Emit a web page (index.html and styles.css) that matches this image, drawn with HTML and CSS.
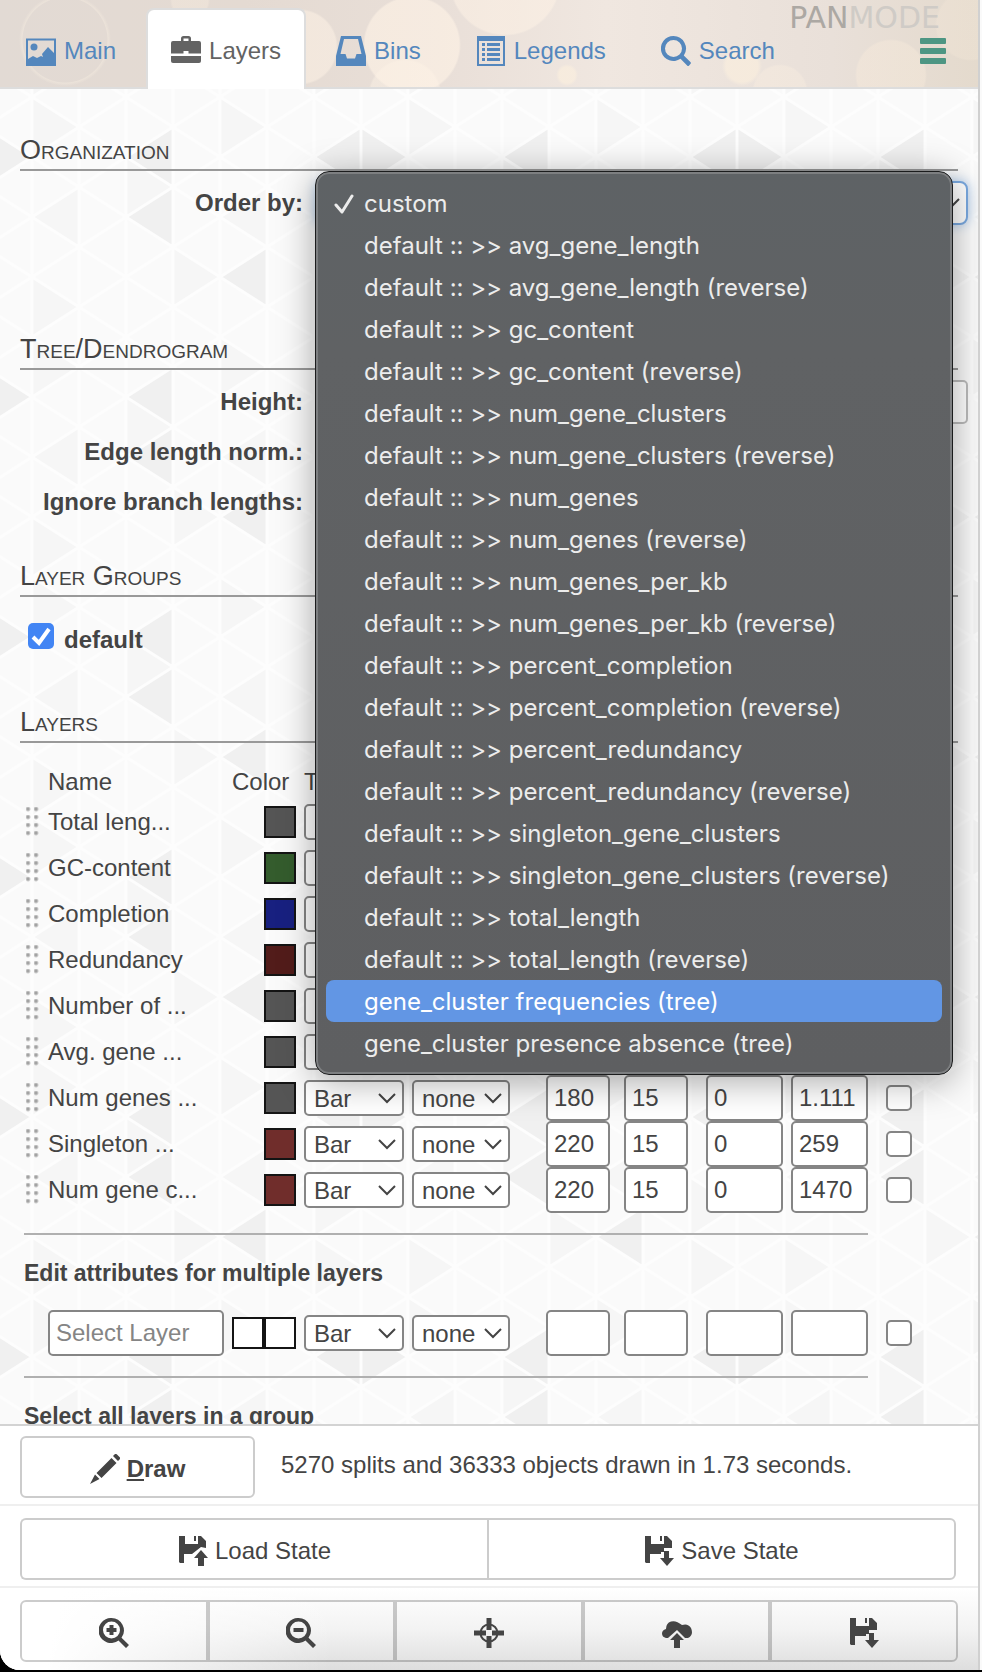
FILE: index.html
```
<!DOCTYPE html>
<html lang="en">
<head>
<meta charset="utf-8">
<title>Layers</title>
<link rel="stylesheet" href="styles.css">
</head>
<body>
<div class="panel">
  <header class="banner">
    <div class="brand" aria-hidden="true"><span class="brand-strong">PAN</span>MODE</div>
    <nav class="tabs">
      <a class="tab" href="#main"><svg class="icon" viewBox="0 0 30 30"><path fill-rule="evenodd" d="M0 2.500h30V30H0zM2 4.500V23l5-3 4 2 4-2 2 1-1-3 6-7 6 6V4.500z"/><circle cx="8" cy="11" r="3.500"/></svg>Main</a>
      <a class="tab tab-active" href="#layers" aria-current="page"><svg class="icon" viewBox="0 0 30 30"><path fill-rule="evenodd" d="M10 5V2.500Q10 0 12.500 0h5Q20 0 20 2.500V5h8q2 0 2 2v10.500H17.500v-2.500h-5v2.500H0V7q0-2 2-2zM12.500 5h5V2.500h-5z"/><path d="M0 20h30v5q0 2-2 2H2q-2 0-2-2z"/></svg>Layers</a>
      <a class="tab" href="#bins"><svg class="icon" viewBox="0 0 30 30"><path fill-rule="evenodd" d="M5 0h20l5 20v10H0V20zM8 3L4.500 18h5L11 22.500h8L20.500 18h5L22 3z"/></svg>Bins</a>
      <a class="tab" href="#legends"><svg class="icon" viewBox="0 0 30 30"><path fill-rule="evenodd" d="M1 0h28v30H1zM3 5v23h24V5zM6 7h3v3H6zm5 0h13v3H11zM6 12h3v3H6zm5 0h13v3H11zM6 17h3v3H6zm5 0h13v3H11zM6 22h3v3H6zm5 0h13v3H11z"/></svg>Legends</a>
      <a class="tab" href="#search"><svg class="icon" viewBox="0 0 30 30"><path fill-rule="evenodd" d="M12.500 0a12.500 12.500 0 0 1 10.300 19.500l6.600 6.600q1 1 0 2l-1.300 1.300q-1 1-2 0l-6.600-6.600A12.500 12.500 0 1 1 12.500 0zM12.500 4a8.500 8.500 0 1 0 0 17a8.500 8.500 0 0 0 0-17z"/></svg>Search</a>
      <button class="menu-toggle" type="button" aria-label="Toggle panel"><span></span><span></span><span></span></button>
    </nav>
  </header>

  <main class="content">
    <section class="section section-organization">
      <h2>Organization</h2>
      <div class="field">
        <label for="order">Order by:</label>
        <div class="control">
          <select id="order" class="select select-wide select-focus"><option value=""></option></select>
          <ul class="dropdown" role="listbox" aria-label="Order by">
            <li role="option" aria-selected="true" class="checked"><svg class="tick" viewBox="0 0 20 20"><path d="M2 11l6 7L18 2"/></svg>custom</li>
            <li role="option">default :: &gt;&gt; avg_gene_length</li>
            <li role="option">default :: &gt;&gt; avg_gene_length (reverse)</li>
            <li role="option">default :: &gt;&gt; gc_content</li>
            <li role="option">default :: &gt;&gt; gc_content (reverse)</li>
            <li role="option">default :: &gt;&gt; num_gene_clusters</li>
            <li role="option">default :: &gt;&gt; num_gene_clusters (reverse)</li>
            <li role="option">default :: &gt;&gt; num_genes</li>
            <li role="option">default :: &gt;&gt; num_genes (reverse)</li>
            <li role="option">default :: &gt;&gt; num_genes_per_kb</li>
            <li role="option">default :: &gt;&gt; num_genes_per_kb (reverse)</li>
            <li role="option">default :: &gt;&gt; percent_completion</li>
            <li role="option">default :: &gt;&gt; percent_completion (reverse)</li>
            <li role="option">default :: &gt;&gt; percent_redundancy</li>
            <li role="option">default :: &gt;&gt; percent_redundancy (reverse)</li>
            <li role="option">default :: &gt;&gt; singleton_gene_clusters</li>
            <li role="option">default :: &gt;&gt; singleton_gene_clusters (reverse)</li>
            <li role="option">default :: &gt;&gt; total_length</li>
            <li role="option">default :: &gt;&gt; total_length (reverse)</li>
            <li role="option" class="hovered">gene_cluster frequencies (tree)</li>
            <li role="option">gene_cluster presence absence (tree)</li>
          </ul>
        </div>
      </div>
    </section>

    <section class="section section-tree">
      <h2>Tree/Dendrogram</h2>
      <div class="field"><label for="height">Height:</label><div class="control"><input id="height" class="input" type="text"></div></div>
      <div class="field"><label for="edge">Edge length norm.:</label><div class="control"><input id="edge" class="checkbox" type="checkbox"></div></div>
      <div class="field"><label for="ignore">Ignore branch lengths:</label><div class="control"><input id="ignore" class="checkbox" type="checkbox"></div></div>
    </section>

    <section class="section section-groups">
      <h2>Layer Groups</h2>
      <div class="group"><input id="group-default" class="checkbox" type="checkbox" checked><label for="group-default">default</label></div>
    </section>

    <section class="section">
      <h2>Layers</h2>
      <div class="layers">
        <table class="grid">
          <colgroup><col class="c-grip"><col><col class="c-color"><col class="c-type"><col class="c-norm"><col class="c-height"><col class="c-margin"><col class="c-min"><col class="c-max"><col class="c-check"></colgroup>
          <thead><tr><th></th><th>Name</th><th>Color</th><th>Type</th><th></th><th></th><th></th><th></th><th></th><th></th></tr></thead>
          <tbody>
            <tr><td><span class="grip"></span></td><td>Total leng...</td><td class="colors"><button type="button" class="swatch gray" aria-label="Color"></button></td><td><select class="select w-type" aria-label="Type"><option value=""></option></select></td><td></td><td></td><td></td><td></td><td></td><td></td></tr>
            <tr><td><span class="grip"></span></td><td>GC-content</td><td class="colors"><button type="button" class="swatch green" aria-label="Color"></button></td><td><select class="select w-type" aria-label="Type"><option value=""></option></select></td><td></td><td></td><td></td><td></td><td></td><td></td></tr>
            <tr><td><span class="grip"></span></td><td>Completion</td><td class="colors"><button type="button" class="swatch blue" aria-label="Color"></button></td><td><select class="select w-type" aria-label="Type"><option value=""></option></select></td><td></td><td></td><td></td><td></td><td></td><td></td></tr>
            <tr><td><span class="grip"></span></td><td>Redundancy</td><td class="colors"><button type="button" class="swatch maroon" aria-label="Color"></button></td><td><select class="select w-type" aria-label="Type"><option value=""></option></select></td><td></td><td></td><td></td><td></td><td></td><td></td></tr>
            <tr><td><span class="grip"></span></td><td>Number of ...</td><td class="colors"><button type="button" class="swatch gray" aria-label="Color"></button></td><td><select class="select w-type" aria-label="Type"><option value=""></option></select></td><td></td><td></td><td></td><td></td><td></td><td></td></tr>
            <tr><td><span class="grip"></span></td><td>Avg. gene ...</td><td class="colors"><button type="button" class="swatch gray" aria-label="Color"></button></td><td><select class="select w-type" aria-label="Type"><option value=""></option></select></td><td></td><td></td><td></td><td></td><td></td><td></td></tr>
            <tr><td><span class="grip"></span></td><td>Num genes ...</td><td class="colors"><button type="button" class="swatch gray" aria-label="Color"></button></td><td><select class="select w-type" aria-label="Type"><option>Bar</option></select></td><td><select class="select w-norm" aria-label="Normalization"><option>none</option></select></td><td><input class="input w-small" aria-label="Height" value="180"></td><td><input class="input w-small" aria-label="Margin" value="15"></td><td><input class="input w-range" aria-label="Min" value="0"></td><td><input class="input w-range" aria-label="Max" value="1.111"></td><td><input class="checkbox" type="checkbox" aria-label="Select Num genes"></td></tr>
            <tr><td><span class="grip"></span></td><td>Singleton ...</td><td class="colors"><button type="button" class="swatch red" aria-label="Color"></button></td><td><select class="select w-type" aria-label="Type"><option>Bar</option></select></td><td><select class="select w-norm" aria-label="Normalization"><option>none</option></select></td><td><input class="input w-small" aria-label="Height" value="220"></td><td><input class="input w-small" aria-label="Margin" value="15"></td><td><input class="input w-range" aria-label="Min" value="0"></td><td><input class="input w-range" aria-label="Max" value="259"></td><td><input class="checkbox" type="checkbox" aria-label="Select Singleton"></td></tr>
            <tr><td><span class="grip"></span></td><td>Num gene c...</td><td class="colors"><button type="button" class="swatch red" aria-label="Color"></button></td><td><select class="select w-type" aria-label="Type"><option>Bar</option></select></td><td><select class="select w-norm" aria-label="Normalization"><option>none</option></select></td><td><input class="input w-small" aria-label="Height" value="220"></td><td><input class="input w-small" aria-label="Margin" value="15"></td><td><input class="input w-range" aria-label="Min" value="0"></td><td><input class="input w-range" aria-label="Max" value="1470"></td><td><input class="checkbox" type="checkbox" aria-label="Select Num gene clusters"></td></tr>
          </tbody>
        </table>
        <hr>
        <h3>Edit attributes for multiple layers</h3>
        <table class="grid">
          <colgroup><col class="c-grip"><col><col class="c-color"><col class="c-type"><col class="c-norm"><col class="c-height"><col class="c-margin"><col class="c-min"><col class="c-max"><col class="c-check"></colgroup>
          <tbody>
            <tr><td></td><td class="picker"><input class="input" type="text" placeholder="Select Layer" aria-label="Select Layer"></td><td class="colors"><button type="button" class="swatch" aria-label="Start color"></button><button type="button" class="swatch" aria-label="End color"></button></td><td><select class="select w-type" aria-label="Type"><option>Bar</option></select></td><td><select class="select w-norm" aria-label="Normalization"><option>none</option></select></td><td><input class="input w-small" aria-label="Height"></td><td><input class="input w-small" aria-label="Margin"></td><td><input class="input w-range" aria-label="Min"></td><td><input class="input w-range" aria-label="Max"></td><td><input class="checkbox" type="checkbox" aria-label="Select all"></td></tr>
          </tbody>
        </table>
        <hr>
        <h3>Select all layers in a group</h3>
      </div>
    </section>
  </main>

  <footer class="actions">
    <div class="row">
      <button type="button" class="btn btn-draw"><svg class="icon" viewBox="0 0 30 30"><path d="M23 2l2-2q1-.5 2 .5L29.500 3q1 1 .5 2l-2 2zM21.500 4l5 5L11.500 24l-5-5zM5 20.500l4.500 4.500L0 30z"/></svg><span><u>D</u>raw</span></button>
      <p class="status">5270 splits and 36333 objects drawn in 1.73 seconds.</p>
    </div>
    <div class="row row-state">
      <button type="button" class="btn"><svg class="icon" viewBox="0 0 30 30"><path fill-rule="evenodd" d="M1 0h6v8h13V0h3l5 5v7l-5-1-9 7H6v9H2L1 26zM16 0h2v5h-2z"/><path d="M23 14l7 8h-4v8h-6v-8h-4z"/></svg>Load State</button>
      <button type="button" class="btn"><svg class="icon" viewBox="0 0 30 30"><path d="M1 0h6v8h13V0h3l5 5v7h-8v4h-3v2H6v9H2L1 26zM16 0h2v5h-2z"/><path d="M20 15h5v7h5l-7 8-7-8h4z"/></svg>Save State</button>
    </div>
    <div class="row row-tools">
      <button type="button" class="btn" aria-label="Zoom in"><svg class="icon" viewBox="0 0 30 30"><path fill-rule="evenodd" d="M12.500 0a12.500 12.500 0 0 1 10 19.800L30 27l-3 3-7.500-7.500A12.500 12.500 0 1 1 12.500 0zM12.500 3.500a8.500 8.500 0 1 0 0 17a8.500 8.500 0 0 0 0-17zM10.500 7h4v3h3v4h-3v3h-4v-3h-3v-4h3z"/></svg></button>
      <button type="button" class="btn" aria-label="Zoom out"><svg class="icon" viewBox="0 0 30 30"><path fill-rule="evenodd" d="M12.500 0a12.500 12.500 0 0 1 10 19.800L30 27l-3 3-7.500-7.500A12.500 12.500 0 1 1 12.500 0zM12.500 3.500a8.500 8.500 0 1 0 0 17a8.500 8.500 0 0 0 0-17zM7.500 10h10v4h-10z"/></svg></button>
      <button type="button" class="btn" aria-label="Center"><svg class="icon" viewBox="0 0 30 30"><circle cx="15" cy="15" r="8.500" fill="none" stroke="currentColor" stroke-width="2"/><path d="M12.500 0h5v12h-5zM12.500 18h5v12h-5zM0 12.500h12v5H0zM18 12.500h12v5H18z"/></svg></button>
      <button type="button" class="btn" aria-label="Upload"><svg class="icon" viewBox="0 0 30 30"><path d="M4 20Q0 19 0 15.500T4 11Q4 5 9 3.500T20 7q6-2 9 3 3 7-3 10l-3 0-8-8-9 8z"/><path d="M15 15l7 7h-4v8h-6v-8H8z"/></svg></button>
      <button type="button" class="btn" aria-label="Save"><svg class="icon" viewBox="0 0 30 30"><path d="M1 0h6v8h13V0h3l5 5v7h-8v4h-3v2H6v9H2L1 26zM16 0h2v5h-2z"/><path d="M20 15h5v7h5l-7 8-7-8h4z"/></svg></button>
    </div>
  </footer>
</div>
</body>
</html>
```

FILE: styles.css
```
* { box-sizing: border-box; }

body {
  margin: 0;
  background: #000;
  color: #444;
  font: 24px/34px "Liberation Sans", Arial, sans-serif;
}

button, input, select { font: inherit; color: inherit; }

.panel {
  display: flex;
  flex-direction: column;
  height: calc(100vh - 2px);
  border-right: 2px solid #d0d0d0;
  margin-right: 2px;
  background: #fff;
  box-shadow: 2px 0 0 #fafafa;
  border-bottom-left-radius: 20px;
  overflow: hidden;
}

.icon {
  flex: none;
  width: 30px;
  height: 30px;
  fill: currentColor;
}

/* Banner and tabs */
.banner {
  position: relative;
  flex: none;
  background:
    radial-gradient(circle at 65px 40px, transparent 42px, rgba(255,245,230,.3) 43px, transparent 46px),
    radial-gradient(circle at 300px 47px, rgba(255,243,230,.5) 36px, transparent 38px),
    radial-gradient(circle at 412px 45px, rgba(255,243,230,.6) 47px, transparent 49px),
    radial-gradient(circle at 405px 96px, rgba(255,245,232,.4) 35px, transparent 37px),
    radial-gradient(circle at 505px -20px, rgba(255,243,230,.5) 54px, transparent 56px),
    radial-gradient(circle at 190px 0, rgba(255,242,226,.3) 18px, transparent 20px),
    radial-gradient(circle at 567px 75px, rgba(255,242,222,.5) 8px, transparent 11px),
    radial-gradient(circle at 742px 66px, rgba(255,242,222,.5) 16px, transparent 20px),
    radial-gradient(circle at 780px 92px, rgba(255,242,226,.3) 26px, transparent 28px),
    radial-gradient(circle at 891px 75px, rgba(255,240,222,.3) 34px, transparent 36px),
    radial-gradient(circle at 971px 25px, rgba(255,240,222,.2) 34px, transparent 36px),
    linear-gradient(to right, #e2dad4, #e4dad2 25%, #e9dfd8 45%, #f0e7e0 62%, #e9e0d9 85%, #e4dacd);
}

.brand {
  position: absolute;
  top: 0;
  right: 38px;
  color: #cfcbc6;
  font: 30px/36px "DejaVu Sans", sans-serif;
}

.brand-strong { color: #aca8a3; }

.tabs {
  position: relative;
  display: flex;
  gap: 5px;
  height: 89px;
  padding: 8px 32px 0 1px;
  border-bottom: 2px solid #ddd;
}

.tab {
  display: flex;
  align-items: center;
  gap: 8px;
  height: 81px;
  padding: 3px 23px 0;
  border: 2px solid transparent;
  border-bottom: 0;
  border-radius: 8px 8px 0 0;
  color: #5487bd;
  text-decoration: none;
}

.tab-active {
  border-color: #ddd;
  background: #fff;
  color: #636363;
}

.menu-toggle {
  display: flex;
  flex-direction: column;
  align-self: center;
  gap: 4px;
  margin: 6px 0 0 auto;
  padding: 0;
  border: 0;
  background: none;
}

.menu-toggle span {
  width: 26px;
  height: 6px;
  border-radius: 1px;
  background: #4d9683;
}

/* Scrolling area */
.content {
  flex: 1;
  min-height: 0;
  padding: 46px 20px 0;
  overflow: hidden;
  background: #fafafa url("data:image/svg+xml,%3Csvg xmlns='http://www.w3.org/2000/svg' width='376' height='240'%3E%3Cpath fill='%23f0f0f0' d='M282 60l47-30v60zM376 60l-47-30v60zM94 60l47-30v60zM94 120l47-30v60zM188 180l47-30v60zM329 150l-47-30v60z'/%3E%3Cpath fill='%23f6f6f6' d='M0 0v60l47-30zM188 0v60l47-30zM94 60v60l47-30zM0 120l47-30v60zM282 120v60l47-30zM188 120l47-30v60zM0 180v60l47-30zM329 210l-47-30v60zM141 150v60l47-30z'/%3E%3Cpath fill='none' stroke='%23fdfdfd' stroke-width='3' d='M0 0v240M47 0v240M94 0v240M141 0v240M188 0v240M235 0v240M282 0v240M329 0v240M376 0v240M0 0l376 240M0 60l282 180M0 120l188 120M0 180l94 60M94 0l282 180M188 0l188 120M282 0l94 60M376 0L0 240M376 60L94 240M376 120L188 240M376 180l-94 60M282 0L0 180M188 0L0 120M94 0L0 60'/%3E%3C/svg%3E") 32px 8px;
}

.section-organization { padding-bottom: 106px; }
.section-tree { padding-bottom: 34px; }
.section-groups { padding-bottom: 44px; }

h2 {
  margin: 0;
  padding-bottom: 4px;
  border-bottom: 2px solid #999;
  font-size: 27px;
  line-height: 30px;
  font-weight: 400;
  font-variant: small-caps;
}

.section-organization h2, .section-tree h2 { margin-bottom: 7px; }

.field {
  display: flex;
  align-items: center;
  gap: 13px;
  height: 50px;
}

.field label {
  flex: none;
  width: 283px;
  font-weight: 700;
  text-align: right;
}

.control {
  position: relative;
  display: flex;
  flex: 1;
  margin-right: -10px;
}

.group {
  display: flex;
  gap: 10px;
  padding: 26px 8px 0;
  height: 66px;
  font-weight: 700;
}

/* Form controls */
.input {
  width: 100%;
  height: 46px;
  padding: 0 6px;
  border: 2px solid #858585;
  border-radius: 5px;
  background: #fff;
  display: block;
}

.input::placeholder { color: #858585; opacity: 1; }

.field .input { height: 44px; border-color: #bbb; }

.select {
  display: block;
  height: 36px;
  padding: 0 8px;
  border: 2px solid #858585;
  border-radius: 5px;
  appearance: none;
  background: #fff url("data:image/svg+xml,%3Csvg xmlns='http://www.w3.org/2000/svg' width='18' height='12'%3E%3Cpath d='M1 2l8 8 8-8' fill='none' stroke='%23444444' stroke-width='2'/%3E%3C/svg%3E") no-repeat right 6px center;
}

.select-wide { width: 100%; height: 44px; }

.select-focus {
  border-color: #7aa9e0;
  border-radius: 8px;
  box-shadow: 0 0 12px #a9c8ec;
}

.checkbox {
  display: block;
  flex: none;
  width: 26px;
  height: 26px;
  margin: 0;
  border: 2px solid #858585;
  border-radius: 5px;
  appearance: none;
  background: #fff;
}

.checkbox:checked {
  border: 0;
  background: #4285f4 url("data:image/svg+xml,%3Csvg xmlns='http://www.w3.org/2000/svg' width='26' height='26'%3E%3Cpath d='M5 14l6 6L21 6' fill='none' stroke='%23ffffff' stroke-width='4'/%3E%3C/svg%3E") no-repeat center;
}

.w-type { width: 100px; }
.w-norm { width: 98px; }
.w-small { width: 64px; }
.w-range { width: 77px; }

/* Dropdown list */
.dropdown {
  position: absolute;
  z-index: 2;
  top: -10px;
  left: -1px;
  right: 15px;
  margin: 0;
  padding: 10px;
  border: 1px solid #1b1c1d;
  border-radius: 14px;
  background: linear-gradient(#5e6265, #606264 20%, #5e5f61);
  box-shadow: inset 0 0 0 2px #7d7f81, 0 6px 36px rgba(0,0,0,.35);
  color: #ececec;
  font: 24px/40px Inter, sans-serif;
  list-style: none;
}

.dropdown li {
  display: flex;
  align-items: center;
  height: 42px;
  padding: 2px 0 0 38px;
  border-radius: 8px;
  white-space: nowrap;
}

.dropdown .checked { gap: 10px; padding-left: 8px; }
.dropdown .hovered { background: #6296e4; color: #fff; }

.tick {
  width: 20px;
  height: 20px;
  fill: none;
  stroke: currentColor;
  stroke-width: 3;
  stroke-linecap: round;
  stroke-linejoin: round;
}

/* Layer tables */
.layers { padding: 21px 0 0 4px; }

.grid {
  width: 100%;
  table-layout: fixed;
  border-collapse: collapse;
}

.grid th, .grid td { padding: 0; text-align: left; font-weight: 400; white-space: nowrap; }
.grid th { height: 35px; }
.grid td { height: 46px; }

.c-grip { width: 24px; }
.c-color { width: 72px; }
.c-type { width: 108px; }
.c-norm { width: 134px; }
.c-height { width: 78px; }
.c-margin { width: 82px; }
.c-min { width: 85px; }
.c-max { width: 95px; }
.c-check { width: 72px; }

.grip {
  display: block;
  width: 14px;
  height: 32px;
  margin: 2px 0 0 2px;
  background: radial-gradient(circle at 2px 2px, #a3a3a3 1px, transparent 3px) 0 0 / 8px 8px;
}

.grid .picker { padding-right: 8px; }

.grid .colors { padding-right: 8px; font-size: 0; text-align: right; }

.swatch {
  width: 32px;
  height: 32px;
  padding: 0;
  border: 2px solid #141414;
  background: #fff;
  vertical-align: middle;
}

.gray { background: #555; }
.green { background: #345c2d; }
.blue { background: #182080; }
.maroon { background: #521c1a; }
.red { background: #702d2b; }

hr {
  height: 2px;
  margin: 20px 90px 0 0;
  border: 0;
  background: #b0b0b0;
}

h3 {
  margin: 21px 0 20px;
  font-size: 23px;
  font-weight: 700;
}

/* Footer */
.actions {
  flex: none;
  border-top: 2px solid #d3d3d3;
}

.row {
  display: flex;
  padding: 10px 20px 6px;
  border-bottom: 2px solid #efefef;
}

.btn {
  display: flex;
  flex: 1;
  align-items: center;
  justify-content: center;
  gap: 7px;
  height: 62px;
  padding: 4px 0 0;
  border: 2px solid #ccc;
  border-radius: 6px;
  background: none;
}

.btn-draw {
  flex: none;
  width: 235px;
  font-weight: 700;
}

.status { margin: 12px 0 0 26px; }

.row-state { padding: 12px 22px 6px 20px; }
.row-state .btn:first-child { border-right: 0; }

.row-tools {
  padding: 12px 20px 8px;
  border-bottom: 0;
  background:
    linear-gradient(100deg, #fff 60px, transparent 340px),
    linear-gradient(#fff, #f3f3f3 50%, #dedede);
}

.row-tools .btn { border-color: rgba(0,0,0,.2); }

.row-state .btn, .row-tools .btn { border-radius: 0; }
.row-state .btn:first-child, .row-tools .btn:first-child { border-radius: 6px 0 0 6px; }
.row-state .btn:last-child, .row-tools .btn:last-child { border-radius: 0 6px 6px 0; }
```
